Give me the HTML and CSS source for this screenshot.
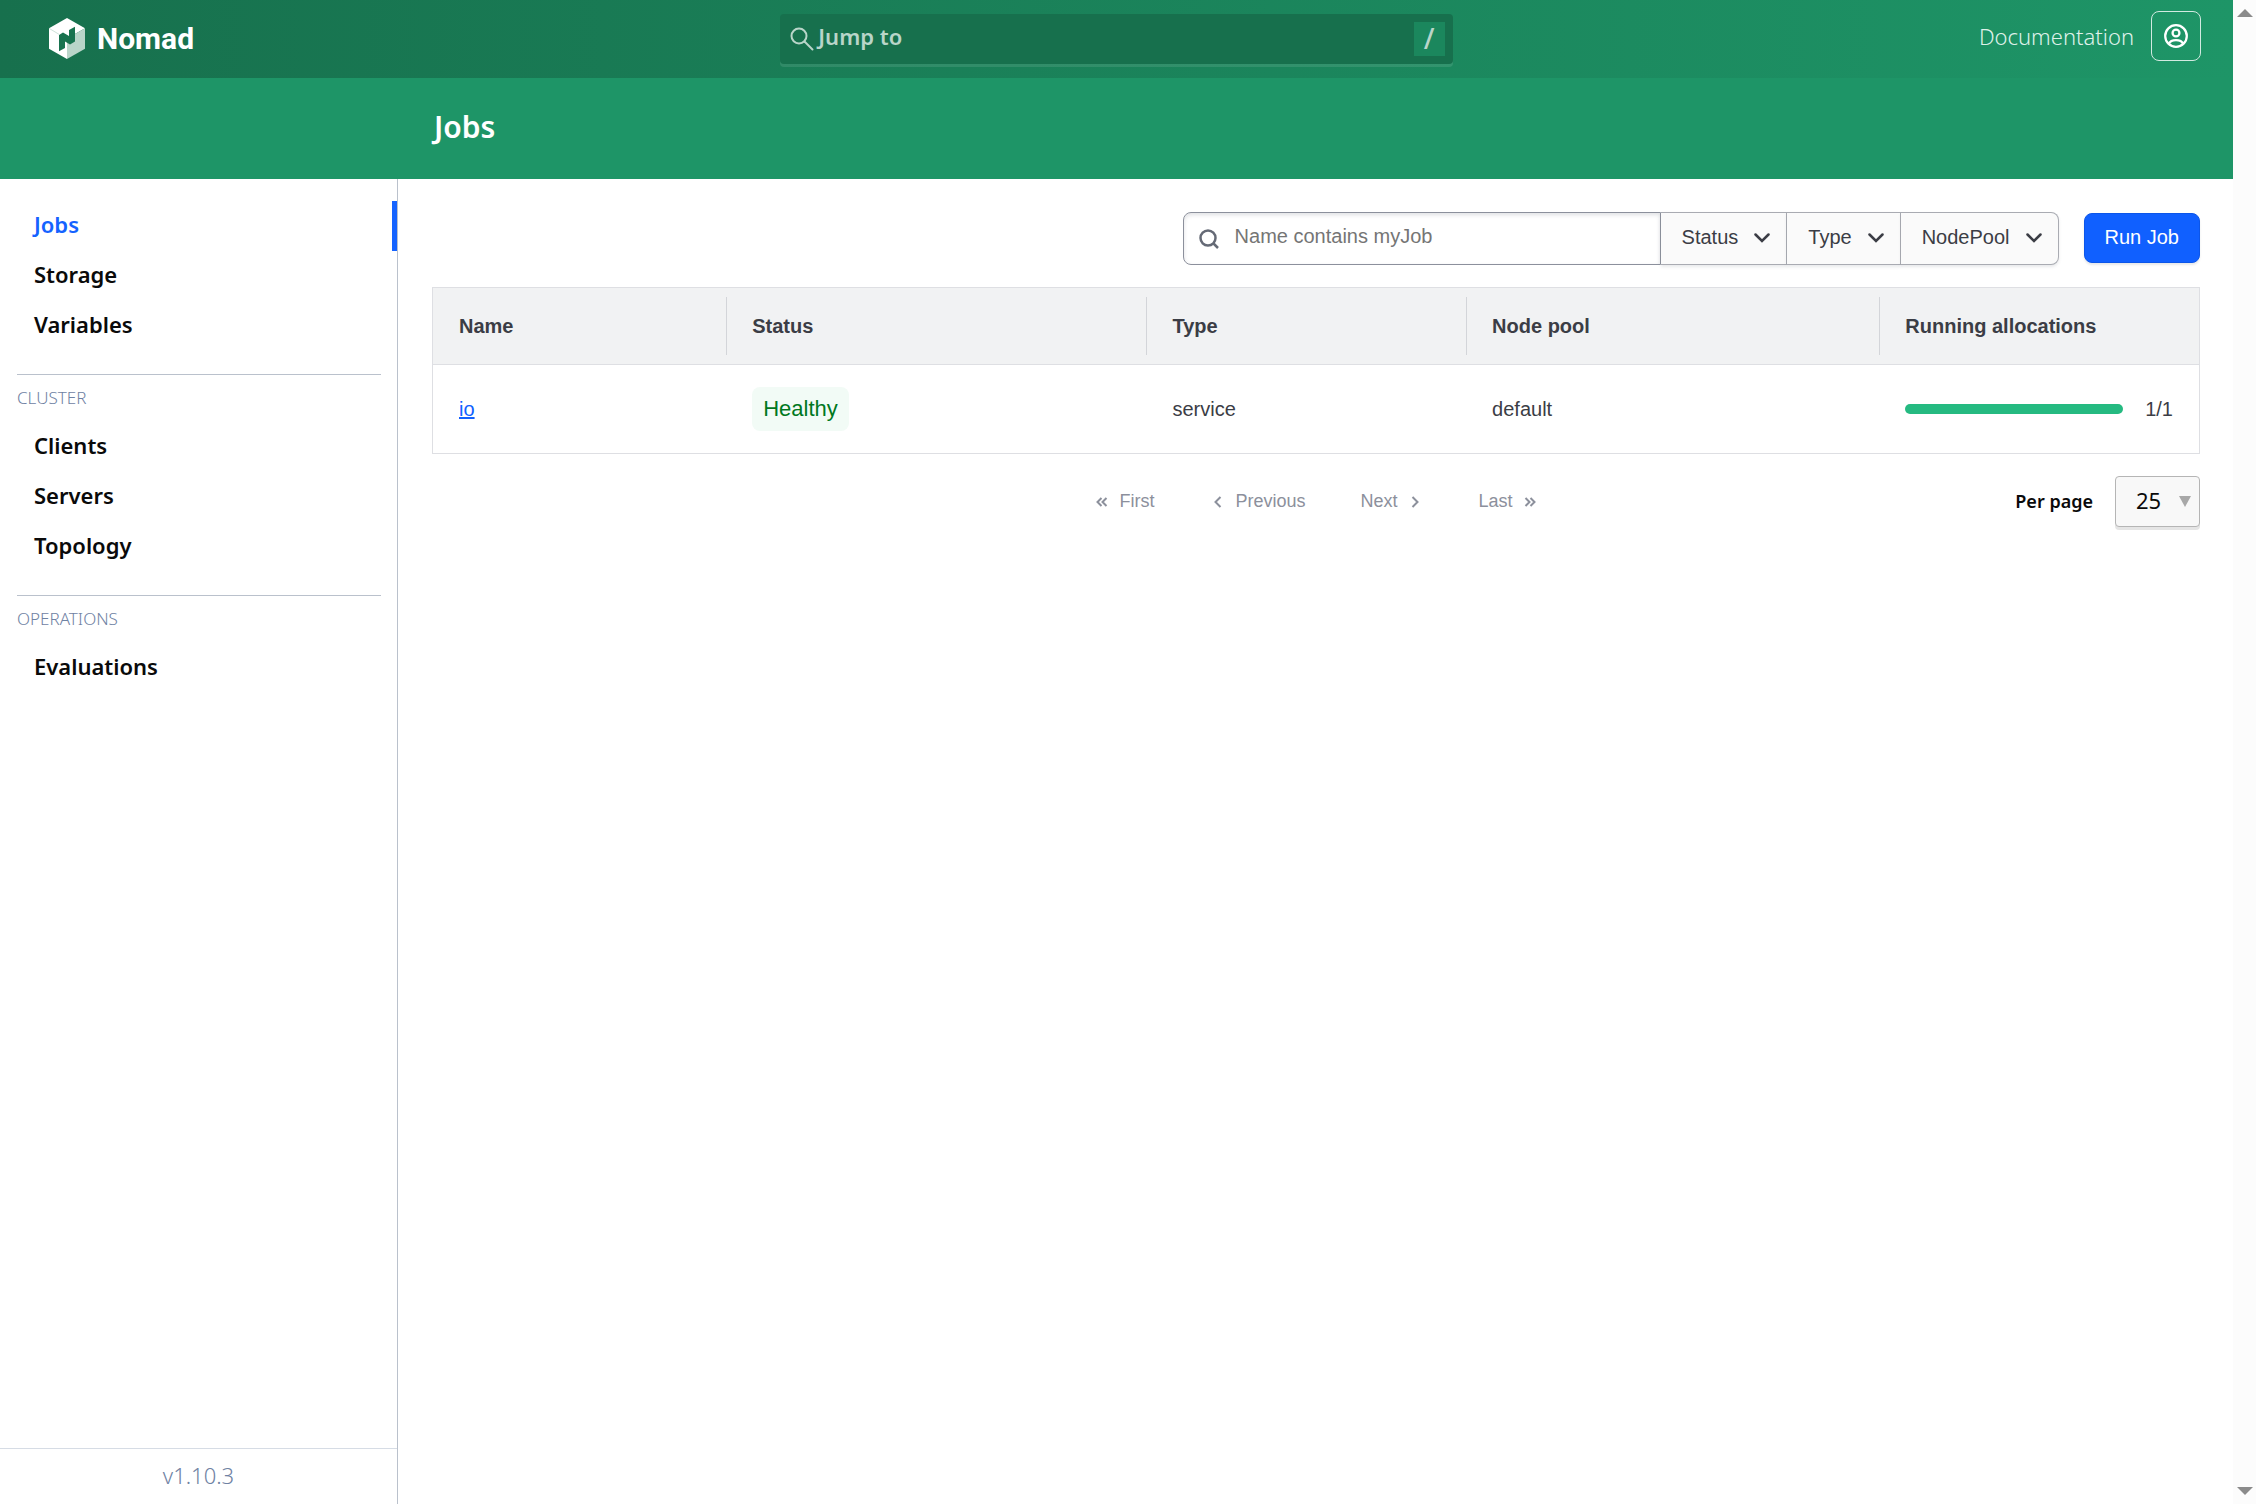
FILE: index.html
```html
<!DOCTYPE html>
<html lang="en">
<head>
    <meta charset="UTF-8">
    <meta name="viewport" content="width=device-width, initial-scale=1.0">
    <title>Jobs - Nomad</title>
    <link rel="stylesheet" href="styles.css">
</head>
<body>

    <div class="app">
        <!-- Top navigation -->
        <header class="navbar">
            <a class="brand" href="#">
                <svg class="brand-mark" viewBox="0 0 36 41">
                    <path fill="#fff" d="M18 0l18 10.300L18 20.500V41L0 30.700V10.300z"/>
                    <path fill="#b9d5c9" d="M36 10.300v20.400L18 41V20.500z"/>
                    <path fill="none" stroke="#b9d5c9" stroke-width="0.700" d="M0 10.300l10 6"/>
                    <path fill="#18734f" d="M10 17l4-2.500 6 3.500v-6l6-3.300v14.800l-5 3-5-3V30l-6 3.300z"/>
                </svg>
                <span>Nomad</span>
            </a>
            <button class="jump">
                <svg class="jump-icon" viewBox="0 0 24 24"><circle cx="9" cy="9" r="7.500"/><path d="M14.500 14.500l8 8"/></svg>
                <span>Jump to</span>
                <kbd>/</kbd>
            </button>
            <div class="navbar-end">
                <a class="docs" href="#">Documentation</a>
                <button class="user" aria-label="Profile">
                    <svg viewBox="0 0 16 16"><circle cx="8" cy="8" r="7.200"/><circle cx="8" cy="6" r="2.300"/><path d="M3.200 13.200c.8-1.800 2.200-2.500 4.800-2.500s4 .7 4.800 2.500"/></svg>
                </button>
            </div>
        </header>

        <div class="page-title">
            <h1>Jobs</h1>
        </div>

        <div class="page">
            <!-- Side menu -->
            <nav class="sidebar">
                <ul class="menu">
                    <li><a class="active" href="#">Jobs</a></li>
                    <li><a href="#">Storage</a></li>
                    <li><a href="#">Variables</a></li>
                </ul>
                <p class="menu-label">Cluster</p>
                <ul class="menu">
                    <li><a href="#">Clients</a></li>
                    <li><a href="#">Servers</a></li>
                    <li><a href="#">Topology</a></li>
                </ul>
                <p class="menu-label">Operations</p>
                <ul class="menu">
                    <li><a href="#">Evaluations</a></li>
                </ul>
                <footer class="version">v1.10.3</footer>
            </nav>

            <!-- Job list -->
            <main class="content">
                <div class="toolbar">
                    <div class="filters">
                        <label class="search">
                            <svg viewBox="0 0 20 20"><circle cx="9" cy="9" r="7.500"/><path d="M14.500 14.500l4.500 4.500"/></svg>
                            <input type="text" aria-label="Job search" placeholder="Name contains myJob">
                        </label>
                        <button class="filter">Status <svg viewBox="0 0 16 10"><path d="M1.500 1.500l6.500 6.500 6.500-6.500"/></svg></button>
                        <button class="filter">Type <svg viewBox="0 0 16 10"><path d="M1.500 1.500l6.500 6.500 6.500-6.500"/></svg></button>
                        <button class="filter">NodePool <svg viewBox="0 0 16 10"><path d="M1.500 1.500l6.500 6.500 6.500-6.500"/></svg></button>
                    </div>
                    <button class="run">Run Job</button>
                </div>

                <table class="jobs">
                    <colgroup>
                        <col class="col-name">
                        <col class="col-status">
                        <col class="col-type">
                        <col class="col-pool">
                        <col class="col-allocs">
                    </colgroup>
                    <thead>
                        <tr>
                            <th><span>Name</span></th>
                            <th><span>Status</span></th>
                            <th><span>Type</span></th>
                            <th><span>Node pool</span></th>
                            <th><span>Running allocations</span></th>
                        </tr>
                    </thead>
                    <tbody>
                        <tr>
                            <td><a href="#">io</a></td>
                            <td><span class="badge">Healthy</span></td>
                            <td>service</td>
                            <td>default</td>
                            <td>
                                <div class="allocs">
                                    <div class="bar"></div>
                                    <span>1/1</span>
                                </div>
                            </td>
                        </tr>
                    </tbody>
                </table>

                <div class="pagination">
                    <div class="pages">
                        <button disabled><svg viewBox="0 0 18 18"><path d="M8.500 5l-4 4 4 4M13.500 5l-4 4 4 4"/></svg>First</button>
                        <button disabled><svg viewBox="0 0 18 18"><path d="M11.500 4l-5 5 5 5"/></svg>Previous</button>
                        <button disabled>Next<svg viewBox="0 0 18 18"><path d="M6.500 4l5 5-5 5"/></svg></button>
                        <button disabled>Last<svg viewBox="0 0 18 18"><path d="M4.500 5l4 4-4 4M9.500 5l4 4-4 4"/></svg></button>
                    </div>
                    <div class="per-page">
                        <label for="pageSize">Per page</label>
                        <div class="select">
                            <select id="pageSize">
                                <option>10</option>
                                <option selected>25</option>
                                <option>50</option>
                            </select>
                            <svg viewBox="0 0 12 11"><path d="M0 0h12L6 11z"/></svg>
                        </div>
                    </div>
                </div>
            </main>
        </div>
    </div>

    <!-- Window scroll gutter -->
    <div class="gutter">
        <svg viewBox="0 0 16 8"><path d="M0 8h16L8 0z"/></svg>
        <svg viewBox="0 0 16 8"><path d="M0 0h16L8 8z"/></svg>
    </div>

</body>
</html>
```
FILE: styles.css
```css
* {
    box-sizing: border-box;
}
body {
    margin: 0;
    display: flex;
    min-height: 100vh;
    font-family: "Noto Sans", "Open Sans", sans-serif;
    font-size: 22px;
    color: #0a0a0a;
    background: #fff;
}
a {
    text-decoration: none;
}
button, input, select {
    font: inherit;
    margin: 0;
}
svg {
    display: block;
    flex: none;
}
.app {
    flex: 1;
    display: flex;
    flex-direction: column;
}
.gutter {
    width: 23px;
    padding: 9px 0;
    display: flex;
    flex-direction: column;
    justify-content: space-between;
    align-items: center;
    background: #fcfcfc;
}
.gutter svg {
    width: 16px;
    height: 8px;
    fill: #8b8b8b;
}

/* Top navigation */
.navbar {
    display: grid;
    grid-template-columns: 1fr 31% 1fr;
    align-items: start;
    height: 78px;
    padding: 0 32px;
    background: linear-gradient(to right, #17704d, #1e9567);
}
.brand {
    display: flex;
    align-items: center;
    gap: 12px;
    height: 77px;
    padding-left: 17px;
    color: #fff;
    font-family: Roboto, sans-serif;
    font-size: 30px;
    font-weight: 700;
}
.brand-mark {
    width: 36px;
    height: 41px;
}
.jump {
    display: flex;
    align-items: center;
    height: 50px;
    margin-top: 14px;
    padding: 0 8px 0 10px;
    border: none;
    border-radius: 4px;
    background: #17704d;
    box-shadow: 0 3px 0 rgba(255, 255, 255, 0.1);
    color: #b9d5c9;
    font-weight: 600;
    text-align: left;
}
.jump span {
    flex: 1;
    padding-bottom: 6px;
}
.jump kbd {
    width: 31px;
    height: 34px;
    background: #1b875d;
    font-family: inherit;
    font-size: 28px;
    font-weight: 500;
    line-height: 32px;
    text-align: center;
}
.jump-icon {
    width: 24px;
    height: 24px;
    margin-right: 4px;
    fill: none;
    stroke: #b9d5c9;
    stroke-width: 2;
    stroke-linecap: round;
}
.navbar-end {
    display: flex;
    justify-content: flex-end;
    align-items: center;
    gap: 17px;
    margin-top: 11px;
}
.docs {
    color: #dff1ea;
    font-weight: 300;
}
.user {
    display: flex;
    align-items: center;
    justify-content: center;
    width: 50px;
    height: 50px;
    padding: 0;
    border: 1px solid #d2eae1;
    border-radius: 8px;
    background: transparent;
}
.user svg {
    width: 24px;
    height: 24px;
    fill: none;
    stroke: #fff;
    stroke-width: 1.500;
}
.page-title {
    display: flex;
    align-items: center;
    height: 101px;
    padding: 0 0 4px 434px;
    background: #1e9567;
}
.page-title h1 {
    margin: 0;
    color: #fff;
    font-size: 30px;
    font-weight: 600;
}
.page {
    flex: 1;
    display: flex;
}

/* Side menu */
.sidebar {
    display: flex;
    flex-direction: column;
    width: 398px;
    padding-top: 22px;
    border-right: 1px solid #bac1cc;
}
.menu {
    margin: 0 0 23px;
    padding: 0;
    list-style: none;
}
.menu a {
    display: block;
    padding: 0 0 4px 34px;
    border-right: 5px solid transparent;
    color: #0a0a0a;
    font-weight: 600;
    line-height: 46px;
}
.menu a.active {
    border-color: #1563ff;
    color: #1563ff;
}
.menu-label {
    margin: 0 16px 0 17px;
    padding: 11px 0 12px;
    border-top: 1px solid #bac1cc;
    color: #6f82a3;
    font-size: 17px;
    font-weight: 300;
    line-height: 24px;
    text-transform: uppercase;
}
.version {
    margin-top: auto;
    padding-bottom: 2px;
    border-top: 1px solid #d6dce5;
    color: #6f82a3;
    font-weight: 300;
    line-height: 53px;
    text-align: center;
}

/* Job list */
.content {
    flex: 1;
    padding: 33px 33px 0 34px;
    color: #3b3d45;
    font-family: "Liberation Sans", Arial, sans-serif;
    font-size: 20px;
}
.toolbar {
    display: flex;
    justify-content: flex-end;
    align-items: flex-start;
    gap: 25px;
    margin-bottom: 22px;
}
.filters {
    display: flex;
    height: 53px;
}
.search {
    display: flex;
    align-items: center;
    gap: 16px;
    width: 478px;
    padding: 0 15px;
    border: 1px solid #8c909c;
    border-radius: 8px 0 0 8px;
    box-shadow: inset 0 2px 4px rgba(101, 106, 118, 0.2);
}
.search svg {
    width: 20px;
    height: 20px;
    fill: none;
    stroke: #656a76;
    stroke-width: 2.500;
}
.search input {
    flex: 1;
    padding: 0 0 4px;
    border: none;
    outline: none;
    background: transparent;
    color: #3b3d45;
}
.search input::placeholder {
    color: #757575;
}
.filter {
    display: flex;
    align-items: center;
    gap: 16px;
    padding: 0 16px 2px 21px;
    border: 1px solid #a9abb2;
    border-left: none;
    background: #fafafa;
    box-shadow: 0 2px 3px rgba(101, 106, 118, 0.15);
    color: #3b3d45;
}
.filter:last-child {
    border-radius: 0 8px 8px 0;
}
.filter svg {
    width: 16px;
    height: 10px;
    fill: none;
    stroke: #3b3d45;
    stroke-width: 2.500;
    stroke-linecap: round;
}
.run {
    height: 50px;
    margin-top: 1px;
    padding: 0 20px 2px;
    border: 1px solid #0c56e9;
    border-radius: 8px;
    background: #1060ff;
    box-shadow: 0 2px 2px rgba(101, 106, 118, 0.15);
    color: #fff;
}
.jobs {
    width: 100%;
    border: 1px solid #dedfe3;
    border-spacing: 0;
    table-layout: fixed;
}
.col-name {
    width: 16.600%;
}
.col-status {
    width: 23.800%;
}
.col-type {
    width: 18.100%;
}
.col-pool {
    width: 23.400%;
}
.jobs th {
    height: 77px;
    padding: 0;
    border-bottom: 1px solid #dedfe3;
    background: #f1f2f3;
    text-align: left;
}
.jobs th span {
    display: block;
    padding-left: 25px;
    border-left: 1px solid #d3d5d9;
    line-height: 58px;
}
.jobs th:first-child span {
    border-color: transparent;
}
.jobs td {
    height: 88px;
    padding: 0 26px;
}
.jobs td a {
    color: #1060ff;
    text-decoration: underline;
}
.badge {
    display: inline-block;
    padding: 0 11px;
    border-radius: 8px;
    background: #f2fbf6;
    color: #00781e;
    font-size: 22px;
    line-height: 44px;
}
.allocs {
    display: flex;
    align-items: center;
    gap: 22px;
}
.bar {
    flex: 1;
    height: 10px;
    border-radius: 5px;
    background: #25ba81;
}
.pagination {
    display: grid;
    grid-template-columns: 1fr auto 1fr;
    align-items: center;
    margin-top: 22px;
}
.pages {
    grid-column: 2;
    display: flex;
    gap: 55px;
}
.pages button {
    display: flex;
    align-items: center;
    gap: 8px;
    padding: 0;
    border: none;
    background: transparent;
    color: #8c909c;
    font-size: 18px;
}
.pages svg {
    width: 18px;
    height: 18px;
    fill: none;
    stroke: #8c909c;
    stroke-width: 2;
}
.per-page {
    display: flex;
    justify-content: flex-end;
    align-items: center;
    gap: 22px;
    color: #0a0a0a;
    font-family: "Noto Sans", "Open Sans", sans-serif;
}
.per-page label {
    padding-bottom: 2px;
    font-size: 18px;
    font-weight: 600;
}
.select {
    position: relative;
}
.select select {
    width: 85px;
    height: 51px;
    padding: 0 0 4px 20px;
    appearance: none;
    border: 1px solid #b5b5b5;
    border-radius: 4px;
    background: #f8f8f8;
    box-shadow: 0 3px 0 rgba(0, 0, 0, 0.1);
    color: #0a0a0a;
    font-size: 22px;
}
.select svg {
    position: absolute;
    top: 20px;
    right: 9px;
    width: 12px;
    height: 11px;
    fill: #a8a8a8;
    pointer-events: none;
}
```
